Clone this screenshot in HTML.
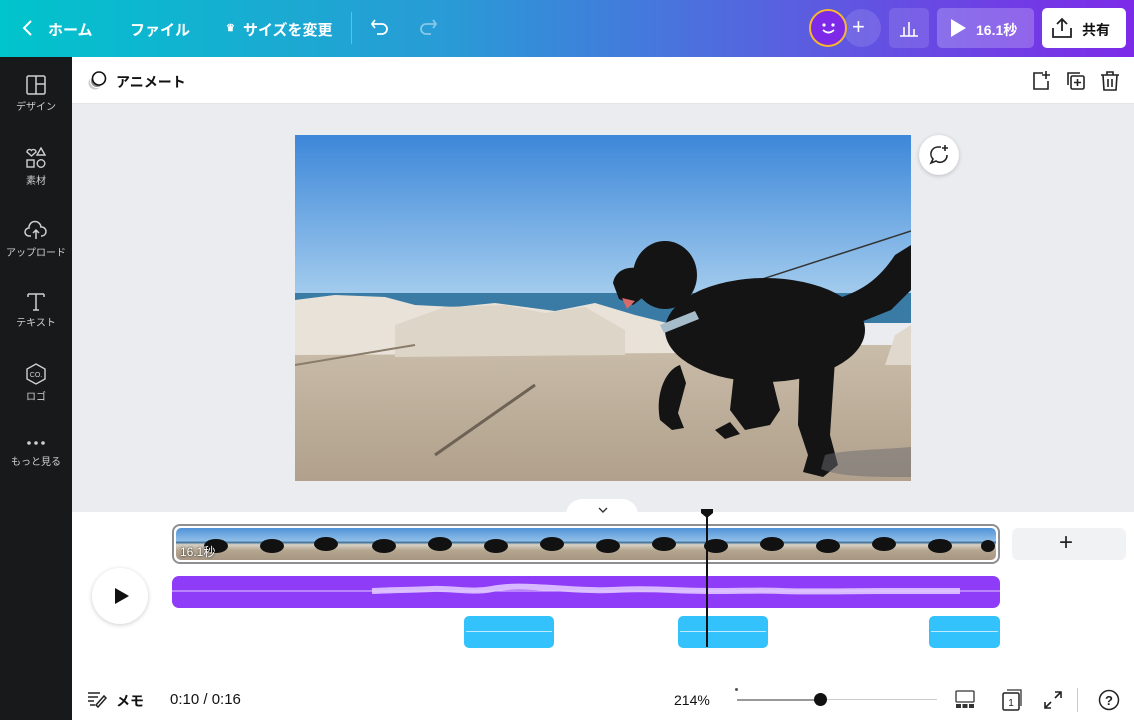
<!DOCTYPE html>
<html><head><meta charset="utf-8"><style>
*{margin:0;padding:0;box-sizing:border-box}
body{width:1134px;height:720px;overflow:hidden;font-family:"Liberation Sans","Noto Sans CJK JP",sans-serif;background:#fff;position:relative}
.abs{position:absolute}
.top{left:0;top:0;width:1134px;height:57px;background:linear-gradient(90deg,#00c4cc 0%,#2a9ad6 40%,#5a5ee0 70%,#7d2ae8 100%)}
.tt{color:#fff;font-size:15px;font-weight:bold;top:19px}
.side{left:0;top:57px;width:72px;height:663px;background:#18191b}
.si{width:72px;text-align:center;color:#cfd0d2;font-size:10px}
.si svg{display:block;margin:0 auto 3px}
.tool{left:72px;top:57px;width:1062px;height:47px;background:#fff;border-bottom:1px solid #e4e5e8}
.canvas{left:72px;top:104px;width:1062px;height:408px;background:#ebecf0}
.tl{left:72px;top:512px;width:1062px;height:208px;background:#fff}
</style></head><body>
<div class="abs top"></div>
<svg class="abs" style="left:20px;top:19px" width="16" height="18"><path d="M11 2 4 9l7 7" stroke="#fff" stroke-width="2" fill="none"/></svg>
<div class="abs tt" style="left:48px">ホーム</div>
<div class="abs tt" style="left:130px">ファイル</div>
<div class="abs tt" style="left:226px;font-size:10px;top:23px">♛</div>
<div class="abs tt" style="left:243px">サイズを変更</div>
<div class="abs" style="left:351px;top:12px;width:1px;height:32px;background:rgba(255,255,255,.3)"></div>
<svg class="abs" style="left:370px;top:17px" width="22" height="20"><path d="M5 3 2 7l3 4M2 7h10a5 5 0 0 1 0 10H7" stroke="#fff" stroke-width="1.8" fill="none"/></svg>
<svg class="abs" style="left:416px;top:17px" width="22" height="20"><path d="M17 3l3 4-3 4M20 7H10a5 5 0 0 0 0 10h5" stroke="rgba(255,255,255,.45)" stroke-width="1.8" fill="none"/></svg>
<div class="abs" style="left:843px;top:9px;width:38px;height:38px;border-radius:50%;background:rgba(255,255,255,.12)"></div>
<div class="abs" style="left:852px;top:14px;color:#fff;font-size:22px">+</div>
<div class="abs" style="left:809px;top:9px;width:38px;height:38px;border-radius:50%;background:#7d2ae8;border:2px solid #f5b82e"></div>
<svg class="abs" style="left:817px;top:17px" width="24" height="22"><circle cx="7" cy="8" r="1.6" fill="#fff"/><circle cx="16" cy="8" r="1.6" fill="#fff"/><path d="M6 13q5.5 5 11 0" stroke="#fff" stroke-width="1.8" fill="none"/></svg>
<div class="abs" style="left:889px;top:8px;width:40px;height:40px;border-radius:5px;background:rgba(255,255,255,.12)"></div>
<svg class="abs" style="left:898px;top:17px" width="22" height="22"><path d="M2 19h18M6 19V10M11 19V5M16 19V12" stroke="#fff" stroke-width="1.6" fill="none"/></svg>
<div class="abs" style="left:937px;top:8px;width:97px;height:40px;border-radius:5px;background:rgba(255,255,255,.22)"></div>
<svg class="abs" style="left:950px;top:19px" width="16" height="18"><path d="M1 0v18l15-9z" fill="#fff"/></svg>
<div class="abs tt" style="left:976px;top:20px;font-size:14px">16.1秒</div>
<div class="abs" style="left:1042px;top:8px;width:84px;height:40px;border-radius:5px;background:#fff"></div>
<svg class="abs" style="left:1051px;top:17px" width="22" height="22"><path d="M11 14V2M6 7l5-5 5 5M2 11v9h18v-9" stroke="#222" stroke-width="1.8" fill="none"/></svg>
<div class="abs" style="left:1082px;top:20px;font-size:14px;font-weight:bold;color:#111">共有</div>

<div class="abs side"></div>
<div class="abs si" style="top:75px"><svg width="20" height="20"><rect x="1" y="1" width="18" height="18" rx="1.5" stroke="#cfd0d2" stroke-width="1.5" fill="none"/><path d="M10 1v18M10 9h9" stroke="#cfd0d2" stroke-width="1.5"/></svg>デザイン</div>
<div class="abs si" style="top:147px"><svg width="22" height="22"><path d="M2 5a2.5 2.5 0 0 1 4.5-1.5A2.5 2.5 0 0 1 11 5l-4.5 4z" stroke="#cfd0d2" stroke-width="1.4" fill="none"/><path d="M16 1l4 7h-8z" stroke="#cfd0d2" stroke-width="1.4" fill="none"/><rect x="2" y="13" width="7" height="7" stroke="#cfd0d2" stroke-width="1.4" fill="none"/><circle cx="16" cy="16.5" r="3.8" stroke="#cfd0d2" stroke-width="1.4" fill="none"/></svg>素材</div>
<div class="abs si" style="top:219px"><svg width="24" height="22"><path d="M7 17H5a4 4 0 0 1 0-8 6 6 0 0 1 12-1 4.5 4.5 0 0 1 1 9h-1M12 20v-9M9 14l3-3 3 3" stroke="#cfd0d2" stroke-width="1.5" fill="none"/></svg>アップロード</div>
<div class="abs si" style="top:291px"><svg width="20" height="20"><path d="M2 3h16M10 3v16M2 3v3M18 3v3M7 19h6" stroke="#cfd0d2" stroke-width="1.5" fill="none"/></svg>テキスト</div>
<div class="abs si" style="top:363px"><svg width="22" height="22"><path d="M11 1l9 5v10l-9 5-9-5V6z" stroke="#cfd0d2" stroke-width="1.4" fill="none"/><text x="11" y="14" font-size="7" fill="#cfd0d2" text-anchor="middle" font-family="Liberation Sans">CO.</text></svg>ロゴ</div>
<div class="abs si" style="top:436px"><svg width="22" height="14"><circle cx="4" cy="7" r="1.8" fill="#cfd0d2"/><circle cx="11" cy="7" r="1.8" fill="#cfd0d2"/><circle cx="18" cy="7" r="1.8" fill="#cfd0d2"/></svg>もっと見る</div>

<div class="abs tool"></div>
<svg class="abs" style="left:86px;top:70px" width="22" height="22"><circle cx="9" cy="13" r="6.5" fill="#ccc"/><circle cx="11" cy="11" r="6.5" fill="#888" stroke="#fff"/><circle cx="13" cy="8.5" r="6.5" fill="#fff" stroke="#111" stroke-width="1.6"/></svg>
<div class="abs" style="left:116px;top:72px;font-size:14px;font-weight:bold;color:#111">アニメート</div>
<svg class="abs" style="left:1031px;top:70px" width="22" height="22"><path d="M12 3H3v16h14v-8M15 1v8M11 5h8" stroke="#222" stroke-width="1.6" fill="none"/></svg>
<svg class="abs" style="left:1065px;top:70px" width="22" height="22"><rect x="6" y="6" width="13" height="13" rx="1.5" stroke="#222" stroke-width="1.6" fill="none"/><path d="M3 15V3h12M12.5 9v7M9 12.5h7" stroke="#222" stroke-width="1.6" fill="none"/></svg>
<svg class="abs" style="left:1099px;top:70px" width="22" height="22"><path d="M2 5h18M8 5V2h6v3M4 5l1 15h12l1-15M9 9v8M13 9v8" stroke="#222" stroke-width="1.6" fill="none"/></svg>

<div class="abs canvas"></div>
<svg class="abs" style="left:295px;top:135px" width="616" height="346" viewBox="0 0 616 346">
<defs>
<linearGradient id="sky" x1="0" y1="0" x2="0" y2="1"><stop offset="0" stop-color="#3d87d9"/><stop offset="1" stop-color="#a5cdee"/></linearGradient>
<linearGradient id="sand" x1="0" y1="0" x2="0" y2="1"><stop offset="0" stop-color="#c9bca8"/><stop offset="1" stop-color="#b0a08c"/></linearGradient>
</defs>
<rect width="616" height="162" fill="url(#sky)"/>
<rect y="158" width="616" height="30" fill="#3a7ba6"/>
<rect y="210" width="616" height="136" fill="url(#sand)"/>
<path d="M0 165 40 160 90 162 120 170 160 172 200 168 260 176 300 168 340 180 380 190 400 218 0 220z" fill="#e8e2d8"/>
<path d="M100 190 150 172 210 170 250 178 290 172 330 195 330 220 100 222z" fill="#ddd5c7"/>
<path d="M600 200 616 190 616 230 590 230z" fill="#e0d8cc"/>
<path d="M140 320 240 250" stroke="#6d6253" stroke-width="3"/>
<path d="M0 230 120 210" stroke="#8a7c6a" stroke-width="2"/>
<path d="M455 148 616 96" stroke="#333" stroke-width="1.5"/>
<g fill="#141414">
<ellipse cx="370" cy="140" rx="32" ry="34"/>
<path d="M318 148c2-12 14-18 28-14l10 22-18 14-14-6z"/>
<ellipse cx="470" cy="195" rx="100" ry="52"/>
<path d="M520 170c40-10 60-20 80-50l16-10v45l-20 20-50 20z"/>
<path d="M385 230c-15 5-25 30-20 55l12 10 12-2-6-15 8-30z"/>
<path d="M440 230l-5 45 15 20 25-5 10-15-10-40z"/>
<path d="M505 215l-2 75 10 30-5 17 20 5 15-12-8-30 5-75z"/>
<path d="M420 295l15-8 10 12-15 5z"/>
</g>
<path d="M365 190l35-14 4 8-35 14z" fill="#a7bccb"/>
<path d="M327 163 340 166 332 174z" fill="#d86a6a"/>
<path d="M530 320c20-5 50-5 86-8v30c-40 0-70 0-90-8z" fill="#6a6a70" opacity=".5"/>
</svg>
<div class="abs" style="left:919px;top:135px;width:40px;height:40px;border-radius:50%;background:#fff;box-shadow:0 1px 4px rgba(0,0,0,.2)"></div>
<svg class="abs" style="left:928px;top:144px" width="22" height="22"><path d="M13 3H10a7 7 0 0 0-5 12l-2 4 5-2a7 7 0 0 0 11-6" stroke="#222" stroke-width="1.6" fill="none"/><path d="M17 1v6M14 4h6" stroke="#222" stroke-width="1.6"/></svg>

<div class="abs tl"></div>
<div class="abs" style="left:566px;top:499px;width:72px;height:20px;border-radius:16px 16px 0 0;background:#fff"></div>
<svg class="abs" style="left:598px;top:506px" width="10" height="8"><path d="M1 2l4 4 4-4" stroke="#333" stroke-width="1.4" fill="none"/></svg>

<div class="abs" style="left:172px;top:524px;width:828px;height:40px;border-radius:8px;border:2px solid #8e8f93;background:#fff;padding:2px;overflow:hidden">
<div style="width:100%;height:100%;border-radius:5px;background:linear-gradient(180deg,#4f92d8 0%,#8fbfe8 40%,#3c6f98 45%,#d8d2c6 52%,#b5a690 70%,#a59582 100%)"></div>
</div>
<svg class="abs" style="left:176px;top:528px" width="820" height="32">
<g fill="#111">
<ellipse cx="40" cy="18" rx="12" ry="7"/><ellipse cx="96" cy="18" rx="12" ry="7"/><ellipse cx="150" cy="16" rx="12" ry="7"/><ellipse cx="208" cy="18" rx="12" ry="7"/><ellipse cx="264" cy="16" rx="12" ry="7"/><ellipse cx="320" cy="18" rx="12" ry="7"/><ellipse cx="376" cy="16" rx="12" ry="7"/><ellipse cx="432" cy="18" rx="12" ry="7"/><ellipse cx="488" cy="16" rx="12" ry="7"/><ellipse cx="540" cy="18" rx="12" ry="7"/><ellipse cx="596" cy="16" rx="12" ry="7"/><ellipse cx="652" cy="18" rx="12" ry="7"/><ellipse cx="708" cy="16" rx="12" ry="7"/><ellipse cx="764" cy="18" rx="12" ry="7"/><ellipse cx="812" cy="18" rx="7" ry="6"/>
</g></svg>
<div class="abs" style="left:180px;top:543px;color:#fff;font-size:12px;text-shadow:0 0 2px #000">16.1秒</div>
<div class="abs" style="left:1012px;top:528px;width:114px;height:32px;border-radius:6px;background:#f1f2f4"></div>
<div class="abs" style="left:1059px;top:529px;font-size:24px;color:#222;font-weight:300">+</div>

<div class="abs" style="left:92px;top:568px;width:56px;height:56px;border-radius:50%;background:#fff;box-shadow:0 1px 5px rgba(0,0,0,.2)"></div>
<svg class="abs" style="left:114px;top:587px" width="16" height="18"><path d="M1 1v16l14-8z" fill="#111"/></svg>
<div class="abs" style="left:172px;top:576px;width:828px;height:32px;border-radius:7px;background:#8e3cf7"></div>
<svg class="abs" style="left:172px;top:576px" width="828" height="32"><path d="M0 15H828" stroke="#e0c7ff" stroke-width="1"/><path d="M200 15c20-1 40-1 60-2s40 4 60 0 40-2 60-1 40 3 60 2 40-1 60 0 30 1 50 1 40-1 60 0 70 0 100 0 60 0 78 0" stroke="#e0c7ff" stroke-width="6" fill="none" opacity=".9"/></svg>
<div class="abs" style="left:464px;top:616px;width:90px;height:32px;border-radius:5px;background:#34c2fc"></div>
<div class="abs" style="left:678px;top:616px;width:90px;height:32px;border-radius:5px;background:#34c2fc"></div>
<div class="abs" style="left:929px;top:616px;width:71px;height:32px;border-radius:5px;background:#34c2fc"></div>
<div class="abs" style="left:466px;top:631px;width:86px;height:1px;background:#bfeaff"></div>
<div class="abs" style="left:680px;top:631px;width:86px;height:1px;background:#bfeaff"></div>
<div class="abs" style="left:931px;top:631px;width:67px;height:1px;background:#bfeaff"></div>
<div class="abs" style="left:706px;top:512px;width:2px;height:135px;background:#111"></div>
<svg class="abs" style="left:700px;top:507px" width="14" height="12"><path d="M1 2h12v4l-6 5-6-5z" fill="#111"/></svg>

<svg class="abs" style="left:87px;top:690px" width="20" height="18"><path d="M1 3h12M1 7h10M1 11h6M3 15h5M9 15l8-9 2 2-8 9z" stroke="#222" stroke-width="1.5" fill="none"/></svg>
<div class="abs" style="left:116px;top:691px;font-size:14px;font-weight:bold;color:#111">メモ</div>
<div class="abs" style="left:170px;top:691px;font-size:15px;color:#111">0:10 / 0:16</div>
<div class="abs" style="left:674px;top:692px;font-size:14px;color:#111">214%</div>
<div class="abs" style="left:735px;top:688px;width:3px;height:3px;border-radius:50%;background:#555"></div>
<div class="abs" style="left:737px;top:699px;width:84px;height:2px;background:#999"></div>
<div class="abs" style="left:821px;top:699px;width:116px;height:1px;background:#ccc"></div>
<div class="abs" style="left:814px;top:693px;width:13px;height:13px;border-radius:50%;background:#111"></div>
<svg class="abs" style="left:955px;top:690px" width="20" height="20"><rect x="1" y="1" width="18" height="11" rx="1" stroke="#333" stroke-width="1.3" fill="none"/><rect x="1" y="14" width="5" height="4" fill="#333"/><rect x="7.5" y="14" width="5" height="4" fill="#333"/><rect x="14" y="14" width="5" height="4" fill="#333"/></svg>
<svg class="abs" style="left:1001px;top:688px" width="24" height="24"><path d="M6 2h14v16" stroke="#333" stroke-width="1.3" fill="none"/><rect x="2" y="5" width="16" height="17" rx="1.5" stroke="#222" stroke-width="1.5" fill="#fff"/><text x="10" y="18" font-size="10" text-anchor="middle" fill="#222" font-family="Liberation Sans">1</text></svg>
<svg class="abs" style="left:1043px;top:690px" width="20" height="20"><path d="M12 2h6v6M18 2l-6 6M8 18H2v-6M2 18l6-6" stroke="#222" stroke-width="1.6" fill="none"/></svg>
<div class="abs" style="left:1077px;top:688px;width:1px;height:24px;background:#ccc"></div>
<svg class="abs" style="left:1098px;top:689px" width="22" height="22"><circle cx="11" cy="11" r="9.5" stroke="#222" stroke-width="1.5" fill="none"/><text x="11" y="16" font-size="13" text-anchor="middle" fill="#222" font-family="Liberation Sans" font-weight="bold">?</text></svg>
</body></html>
